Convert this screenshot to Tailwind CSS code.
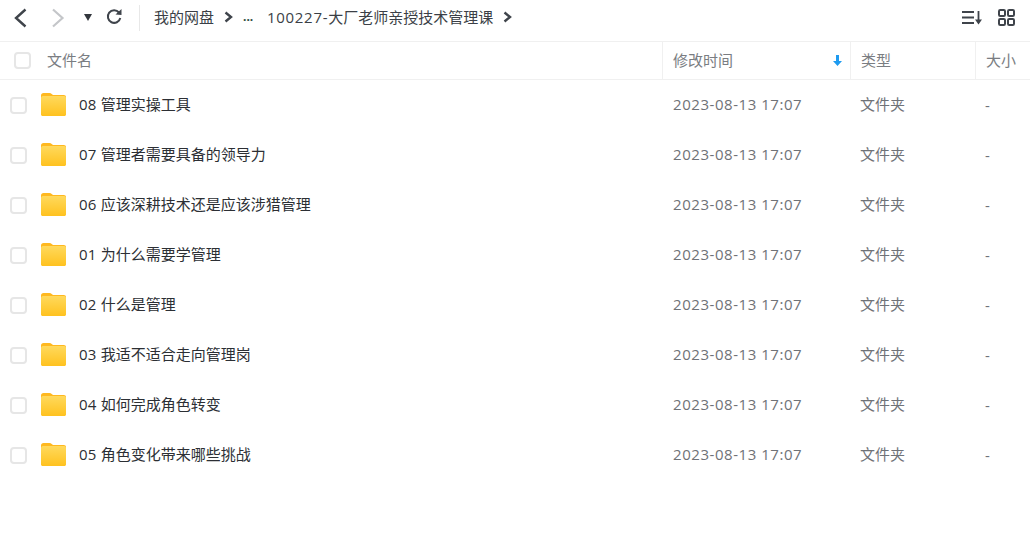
<!DOCTYPE html>
<html lang="zh-CN">
<head>
<meta charset="utf-8">
<script src="https://cdn.jsdelivr.net/npm/@tailwindcss/browser@4"></script>
</head>
<body class="bg-white w-[1030px] h-[548px] overflow-hidden font-['Open_Sans','Noto_Sans_CJK_SC',sans-serif] text-[15px] leading-[20px]">
<svg width="0" height="0" class="absolute">
  <defs>
    <linearGradient id="fg" x1="0" y1="0" x2="0" y2="1"><stop offset="0" stop-color="#ffd95c"/><stop offset="1" stop-color="#ffc21f"/></linearGradient>
    <symbol id="folder" viewBox="0 0 25 23">
      <path d="M0 2.500C0 1.100 1 0 2.500 0h6c.9 0 1.600.4 2.200 1L12 2h10.800C24.200 2 25 2.800 25 4.200V20.700c0 1.400-1 2.300-2.300 2.300H2.300C1 23 0 22.100 0 20.700z" fill="#ffb81f"/>
      <path d="M0 5C0 4 .7 3 1.800 3h21.400C24.300 3 25 4 25 5V20.700c0 1.400-1 2.300-2.300 2.300H2.300C1 23 0 22.100 0 20.700z" fill="url(#fg)"/>
    </symbol>
  </defs>
</svg>

<header class="h-[42px] flex items-center border-b border-[#f0f0f0] text-[#3b3f46]">
  <div class="w-[139px] h-[42px] flex items-center relative">
    <svg class="absolute left-[12px] top-[7px]" width="16" height="22" viewBox="0 0 16 22" fill="none" stroke="#3f444b" stroke-width="2.400"><path d="M13.500 2.500 4 11l9.500 8.500"/></svg>
    <svg class="absolute left-[50px] top-[7px]" width="16" height="22" viewBox="0 0 16 22" fill="none" stroke="#c4c6c9" stroke-width="2.200"><path d="M3 2.500 12.500 11 3 19.500"/></svg>
    <svg class="absolute left-[84px] top-[14px]" width="8" height="7" viewBox="0 0 8 7"><path d="M0 0h8L4 7z" fill="#33373d"/></svg>
    <svg class="absolute left-[105px] top-[8px]" width="18" height="18" viewBox="0 0 18 18" fill="none"><path d="M14 4.500A6.300 6.300 0 1 0 15.300 10" stroke="#3f444b" stroke-width="2"/><path d="M10.500 6.500 16.500 7V1z" fill="#3f444b"/></svg>
  </div>
  <div class="w-px h-[26px] bg-[#e8e8e8] -mt-[6px]"></div>
  <nav class="flex items-center -mt-[8px] ml-[14px]">
    <span>我的网盘</span>
    <svg class="ml-[10px]" width="9" height="12" viewBox="0 0 9 12" fill="none" stroke="#3f444b" stroke-width="2.400"><path d="M1.500 1.500 7 6l-5.500 4.500"/></svg>
    <span class="ml-[10px] w-[24px] font-bold text-[12px] text-[#2d4a3e]">...</span>
    <span class="tracking-[0.7px]">100227-</span><span>大厂老师亲授技术管理课</span>
    <svg class="ml-[10px]" width="9" height="12" viewBox="0 0 9 12" fill="none" stroke="#3f444b" stroke-width="2.400"><path d="M1.500 1.500 7 6l-5.500 4.500"/></svg>
  </nav>
  <div class="ml-auto flex items-center gap-[16px] mr-[15px] -mt-[6px]">
    <svg width="20" height="15" viewBox="0 0 20 15" fill="none" stroke="#3f444b" stroke-width="1.800"><path d="M0 2h12M0 7.500h12M0 13h12M16.500 1v11"/><path d="M13 9.500h7L16.500 14.500z" fill="#3f444b" stroke="none"/></svg>
    <svg width="17" height="17" viewBox="0 0 17 17" fill="none" stroke="#3f444b" stroke-width="2"><rect x="1" y="1" width="6" height="6" rx="1.200"/><rect x="10" y="1" width="6" height="6" rx="1.200"/><rect x="1" y="10" width="6" height="6" rx="1.200"/><rect x="10" y="10" width="6" height="6" rx="1.200"/></svg>
  </div>
</header>

<div class="h-[38px] flex items-center border-b border-[#f0f0f0] text-[#7a7d82]">
  <div class="w-[663px] h-full flex items-center border-r border-[#f0f0f0]">
    <span class="ml-[14px] w-[17px] h-[17px] rounded-[4px] border-2 border-[#e6e6e6]"></span>
    <span class="ml-[16px] mb-[2px]">文件名</span>
  </div>
  <div class="w-[188px] h-full flex items-center justify-between border-r border-[#f0f0f0] pl-[10px] pr-[8px]">
    <span class="mb-[2px]">修改时间</span>
    <svg width="9" height="11" viewBox="0 0 9 11"><path d="M3 0h3v6h3l-4.500 5L0 6h3z" fill="#1e9bf0"/></svg>
  </div>
  <div class="w-[125px] h-full flex items-center border-r border-[#f0f0f0] pl-[10px]"><span class="mb-[2px]">类型</span></div>
  <div class="pl-[10px] mb-[2px]">大小</div>
</div>

<main class="text-[#6f7277]">
  <div class="h-[50px] flex items-center">
    <span class="ml-[10px] w-[17px] h-[17px] rounded-[4px] border-2 border-[#e6e6e6]"></span>
    <svg class="ml-[14px] mb-[1px]" width="25" height="23"><use href="#folder"/></svg>
    <span class="ml-[13px] w-[594px] mb-[2px] text-[#2c2f34]"><span class="tracking-[0.2px]">08 </span>管理实操工具</span>
    <span class="w-[187px] mb-[2px] tracking-[0.55px]">2023-08-13 17:07</span>
    <span class="w-[125px] mb-[2px]">文件夹</span>
    <span>-</span>
  </div>
  <div class="h-[50px] flex items-center">
    <span class="ml-[10px] w-[17px] h-[17px] rounded-[4px] border-2 border-[#e6e6e6]"></span>
    <svg class="ml-[14px] mb-[1px]" width="25" height="23"><use href="#folder"/></svg>
    <span class="ml-[13px] w-[594px] mb-[2px] text-[#2c2f34]"><span class="tracking-[0.2px]">07 </span>管理者需要具备的领导力</span>
    <span class="w-[187px] mb-[2px] tracking-[0.55px]">2023-08-13 17:07</span>
    <span class="w-[125px] mb-[2px]">文件夹</span>
    <span>-</span>
  </div>
  <div class="h-[50px] flex items-center">
    <span class="ml-[10px] w-[17px] h-[17px] rounded-[4px] border-2 border-[#e6e6e6]"></span>
    <svg class="ml-[14px] mb-[1px]" width="25" height="23"><use href="#folder"/></svg>
    <span class="ml-[13px] w-[594px] mb-[2px] text-[#2c2f34]"><span class="tracking-[0.2px]">06 </span>应该深耕技术还是应该涉猎管理</span>
    <span class="w-[187px] mb-[2px] tracking-[0.55px]">2023-08-13 17:07</span>
    <span class="w-[125px] mb-[2px]">文件夹</span>
    <span>-</span>
  </div>
  <div class="h-[50px] flex items-center">
    <span class="ml-[10px] w-[17px] h-[17px] rounded-[4px] border-2 border-[#e6e6e6]"></span>
    <svg class="ml-[14px] mb-[1px]" width="25" height="23"><use href="#folder"/></svg>
    <span class="ml-[13px] w-[594px] mb-[2px] text-[#2c2f34]"><span class="tracking-[0.2px]">01 </span>为什么需要学管理</span>
    <span class="w-[187px] mb-[2px] tracking-[0.55px]">2023-08-13 17:07</span>
    <span class="w-[125px] mb-[2px]">文件夹</span>
    <span>-</span>
  </div>
  <div class="h-[50px] flex items-center">
    <span class="ml-[10px] w-[17px] h-[17px] rounded-[4px] border-2 border-[#e6e6e6]"></span>
    <svg class="ml-[14px] mb-[1px]" width="25" height="23"><use href="#folder"/></svg>
    <span class="ml-[13px] w-[594px] mb-[2px] text-[#2c2f34]"><span class="tracking-[0.2px]">02 </span>什么是管理</span>
    <span class="w-[187px] mb-[2px] tracking-[0.55px]">2023-08-13 17:07</span>
    <span class="w-[125px] mb-[2px]">文件夹</span>
    <span>-</span>
  </div>
  <div class="h-[50px] flex items-center">
    <span class="ml-[10px] w-[17px] h-[17px] rounded-[4px] border-2 border-[#e6e6e6]"></span>
    <svg class="ml-[14px] mb-[1px]" width="25" height="23"><use href="#folder"/></svg>
    <span class="ml-[13px] w-[594px] mb-[2px] text-[#2c2f34]"><span class="tracking-[0.2px]">03 </span>我适不适合走向管理岗</span>
    <span class="w-[187px] mb-[2px] tracking-[0.55px]">2023-08-13 17:07</span>
    <span class="w-[125px] mb-[2px]">文件夹</span>
    <span>-</span>
  </div>
  <div class="h-[50px] flex items-center">
    <span class="ml-[10px] w-[17px] h-[17px] rounded-[4px] border-2 border-[#e6e6e6]"></span>
    <svg class="ml-[14px] mb-[1px]" width="25" height="23"><use href="#folder"/></svg>
    <span class="ml-[13px] w-[594px] mb-[2px] text-[#2c2f34]"><span class="tracking-[0.2px]">04 </span>如何完成角色转变</span>
    <span class="w-[187px] mb-[2px] tracking-[0.55px]">2023-08-13 17:07</span>
    <span class="w-[125px] mb-[2px]">文件夹</span>
    <span>-</span>
  </div>
  <div class="h-[50px] flex items-center">
    <span class="ml-[10px] w-[17px] h-[17px] rounded-[4px] border-2 border-[#e6e6e6]"></span>
    <svg class="ml-[14px] mb-[1px]" width="25" height="23"><use href="#folder"/></svg>
    <span class="ml-[13px] w-[594px] mb-[2px] text-[#2c2f34]"><span class="tracking-[0.2px]">05 </span>角色变化带来哪些挑战</span>
    <span class="w-[187px] mb-[2px] tracking-[0.55px]">2023-08-13 17:07</span>
    <span class="w-[125px] mb-[2px]">文件夹</span>
    <span>-</span>
  </div>
</main>
</body>
</html>
